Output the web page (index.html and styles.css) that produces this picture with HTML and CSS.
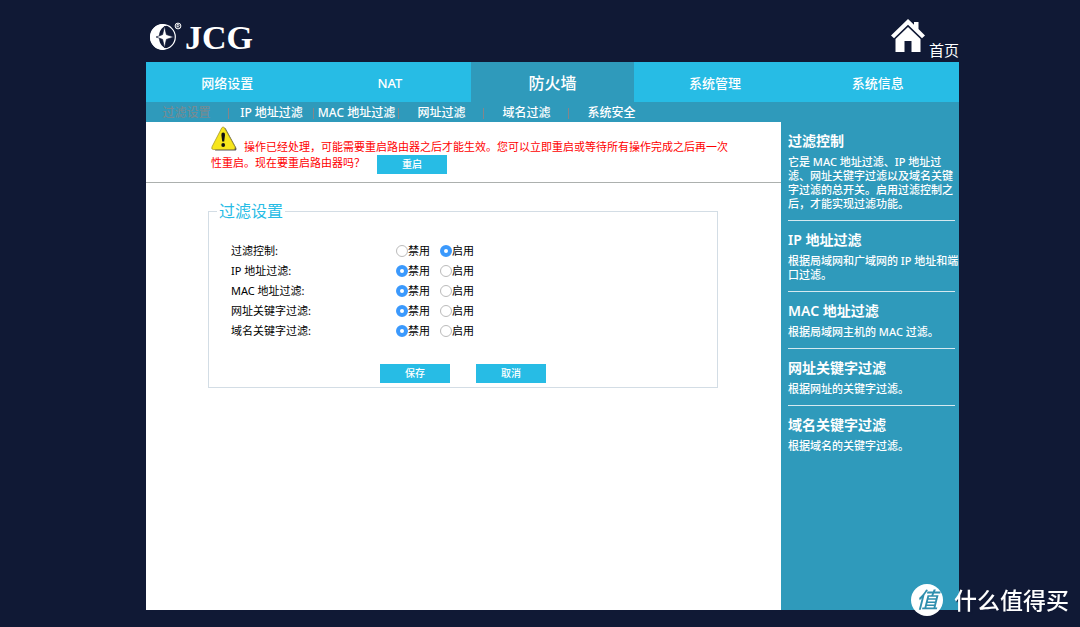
FILE: index.html
```html
<!DOCTYPE html>
<html lang="zh-CN">
<head>
<meta charset="utf-8">
<meta name="viewport" content="width=device-width, initial-scale=1">
<title>JCG 过滤设置</title>
<link rel="stylesheet" href="styles.css">
</head>
<body>
<div class="page">
  <header class="header">
    <div class="logo">
      <svg class="logo-mark" viewBox="0 0 34 30" width="34" height="30" aria-hidden="true">
        <circle cx="14" cy="17" r="12.3" fill="none" stroke="#fff" stroke-width="1.2"/>
        <path d="M14 4A13 13 0 0 0 14 30L18 28.500C12 27 10 22 10 17S12 7 18 5.500Z" fill="#fff"/>
        <path d="M15.500 6L17.400 14.600L25 17L17.400 19.400L15.500 28L13.600 19.400L7 17L13.600 14.600Z" fill="#fff" stroke="#101935" stroke-width=".7"/>
        <circle cx="29" cy="6" r="2.900" fill="none" stroke="#fff" stroke-width="1"/>
        <path d="M28 7.700V4.500H29.300A.9 .9 0 0 1 29.300 6.300H28M29 6.300L30.200 7.700" fill="none" stroke="#fff" stroke-width=".8"/>
      </svg>
      <span class="logo-text">JCG</span>
    </div>
    <a class="home" href="#">
      <svg viewBox="0 0 34 33" width="34" height="33" aria-hidden="true">
        <path d="M17 0L23 5.800V3H27.500V10L34 16.500L31 19.300L17 5.800L3 19.300L0 16.500Z" fill="#fff"/>
        <path d="M17 8L29.500 20V33H20.500V22H13.500V33H4.500V20Z" fill="#fff"/>
      </svg>
      <span>首页</span>
    </a>
  </header>

  <nav class="nav">
    <a href="#">网络设置</a>
    <a href="#">NAT</a>
    <a class="active" href="#">防火墙</a>
    <a href="#">系统管理</a>
    <a href="#">系统信息</a>
  </nav>
  <nav class="subnav">
    <a class="current" href="#">过滤设置</a>
    <a href="#">IP 地址过滤</a>
    <a href="#">MAC 地址过滤</a>
    <a href="#">网址过滤</a>
    <a href="#">域名过滤</a>
    <a href="#">系统安全</a>
  </nav>

  <div class="body">
    <main class="content">
      <div class="notice">
        <div class="notice-text"><svg class="warn" viewBox="0 0 26 25" width="26" height="25" aria-hidden="true">
            <path d="M12 2.500Q13.500 1 15 3L25.300 22Q26 24.500 23.500 24.600H4Z" fill="#555"/>
            <path d="M10.800 1.800Q12 0 13.400 1.800L24 20.800Q24.800 23.300 22.400 23.500H2.300Q0 23.300 1 20.800Z" fill="#f7e61c" stroke="#a89a2c" stroke-width=".8"/>
            <path d="M10.400 9Q10.200 6.600 12.200 6.600T14 9L13.200 15.600H11.200Z" fill="#111"/>
            <circle cx="12.200" cy="19" r="1.900" fill="#111"/>
          </svg><span>操作已经处理，可能需要重启路由器之后才能生效。您可以立即重启或等待所有操作完成之后再一次性重启。现在要重启路由器吗？</span><button class="btn" type="button">重启</button></div>
      </div>

      <form>
        <fieldset class="panel">
          <legend>过滤设置</legend>
          <div class="rows">
            <div class="row" role="radiogroup" aria-labelledby="l1">
              <span id="l1">过滤控制:</span>
              <label><input type="radio" name="all" value="0">禁用</label>
              <label><input type="radio" name="all" value="1" checked>启用</label>
            </div>
            <div class="row" role="radiogroup" aria-labelledby="l2">
              <span id="l2">IP 地址过滤:</span>
              <label><input type="radio" name="ip" value="0" checked>禁用</label>
              <label><input type="radio" name="ip" value="1">启用</label>
            </div>
            <div class="row" role="radiogroup" aria-labelledby="l3">
              <span id="l3">MAC 地址过滤:</span>
              <label><input type="radio" name="mac" value="0" checked>禁用</label>
              <label><input type="radio" name="mac" value="1">启用</label>
            </div>
            <div class="row" role="radiogroup" aria-labelledby="l4">
              <span id="l4">网址关键字过滤:</span>
              <label><input type="radio" name="url" value="0" checked>禁用</label>
              <label><input type="radio" name="url" value="1">启用</label>
            </div>
            <div class="row" role="radiogroup" aria-labelledby="l5">
              <span id="l5">域名关键字过滤:</span>
              <label><input type="radio" name="domain" value="0" checked>禁用</label>
              <label><input type="radio" name="domain" value="1">启用</label>
            </div>
          </div>
          <div class="actions">
            <button class="btn" type="submit">保存</button>
            <button class="btn" type="reset">取消</button>
          </div>
        </fieldset>
      </form>
    </main>

    <aside class="help">
      <section>
        <h2>过滤控制</h2>
        <p>它是 MAC 地址过滤、IP 地址过滤、网址关键字过滤以及域名关键字过滤的总开关。启用过滤控制之后，才能实现过滤功能。</p>
      </section>
      <section>
        <h2>IP 地址过滤</h2>
        <p>根据局域网和广域网的 IP 地址和端口过滤。</p>
      </section>
      <section>
        <h2>MAC 地址过滤</h2>
        <p>根据局域网主机的 MAC 过滤。</p>
      </section>
      <section>
        <h2>网址关键字过滤</h2>
        <p>根据网址的关键字过滤。</p>
      </section>
      <section>
        <h2>域名关键字过滤</h2>
        <p>根据域名的关键字过滤。</p>
      </section>
    </aside>
  </div>
</div>

<div class="watermark">
  <span class="watermark-badge">值</span>
  <span>什么值得买</span>
</div>
</body>
</html>
```

FILE: styles.css
```css
* { box-sizing: border-box; }

body {
  margin: 0;
  background: #101935;
  color: #000;
  font-family: "Noto Sans", "Noto Sans CJK SC", sans-serif;
  font-size: 11px;
}

a { color: #fff; text-decoration: none; }

.page {
  display: flex;
  flex-direction: column;
  min-height: 100vh;
  padding: 0 121px 17px 146px;
}

.header {
  display: flex;
  justify-content: space-between;
  align-items: flex-end;
  height: 62px;
}

.logo {
  display: flex;
  align-items: flex-end;
  gap: 2px;
  padding: 0 0 12px 3px;
  color: #fff;
}

.logo-text {
  font: bold 34px/24px "Liberation Serif", serif;
}

.home {
  display: flex;
  align-items: flex-end;
  gap: 4px;
  font-size: 15px;
  line-height: 24px;
}

.home svg { margin-bottom: 10px; }

.nav {
  display: grid;
  grid-template-columns: repeat(5, 1fr);
  background: #27bce5;
}

.nav a {
  height: 40px;
  font-size: 13px;
  font-weight: 500;
  line-height: 42px;
  text-align: center;
}

.nav .active {
  background: #2f9abb;
  font-size: 16px;
}

.subnav {
  display: flex;
  background: #2f9abb;
}

.subnav a {
  position: relative;
  width: 85px;
  padding: 1px 4px 0 0;
  font-size: 12px;
  font-weight: 500;
  line-height: 20px;
  text-align: center;
  white-space: nowrap;
  height: 20px;
  display: flex;
  justify-content: center;
}

.subnav a + a::before {
  content: "";
  position: absolute;
  left: -3px;
  top: 6px;
  width: 1px;
  height: 11px;
  background: #85858a;
}

.subnav .current { color: #748b94; }

.body {
  display: flex;
  flex: 1;
}

.content {
  flex: 1;
  background: #fff;
}

.notice {
  height: 61px;
  padding: 4px 40px 0 65px;
  border-bottom: 1px solid #acb0ae;
}

.notice-text {
  max-width: 524px;
  color: #f00;
  line-height: 16px;
}

.warn { margin-right: 7px; }

.btn {
  width: 70px;
  height: 19px;
  padding: 0;
  border: 0;
  background: #27bce5;
  color: #fff;
  font-family: inherit;
  font-size: 10px;
  font-weight: 500;
  line-height: 19px;
}

.notice .btn {
  margin-left: 12px;
  vertical-align: middle;
}

.panel {
  margin: 16px 63px 0 62px;
  padding: 18px 22px 4px;
  border: 1px solid #d3dde5;
}

.panel legend {
  margin-left: -14px;
  padding: 0 2px;
  color: #27bce5;
  font-size: 16px;
  line-height: 24px;
}

.row {
  display: grid;
  grid-template-columns: 155px 34px 34px;
  column-gap: 10px;
  line-height: 20px;
}

.row label {
  display: flex;
  align-items: center;
  white-space: nowrap;
}

.row input {
  appearance: none;
  flex: none;
  width: 12px;
  height: 12px;
  margin: 0;
  border: 1px solid #bbb;
  border-radius: 50%;
  background: #fff;
}

.row input:checked {
  border: 4px solid #3b99fc;
}

.actions {
  display: flex;
  gap: 26px;
  padding: 23px 0 0 149px;
}

.help {
  width: 178px;
  padding: 0 4px 0 7px;
  background: #2f9abb;
  color: #fff;
}

.help section {
  padding: 8px 0 9px;
  border-bottom: 1px solid #d5e9f0;
}

.help section:last-child { border-bottom: 0; }

.help h2 {
  margin: 0 0 3px;
  font-size: 14px;
  font-weight: 600;
  line-height: 22px;
}

.help p {
  margin: 0 -4px 0 0;
  font-weight: 500;
  line-height: 14px;
}

.watermark {
  position: fixed;
  right: 11px;
  bottom: 11px;
  display: flex;
  align-items: center;
  gap: 11px;
  color: #fff;
  font-size: 23px;
  font-weight: 500;
  line-height: 32px;
  text-shadow: 1px 1px 1px #101935;
}

.watermark-badge {
  width: 32px;
  height: 32px;
  border-radius: 50%;
  background: #fff;
  color: #2f8fae;
  font-size: 22px;
  font-style: italic;
  line-height: 30px;
  text-align: center;
  text-shadow: none;
}
```
